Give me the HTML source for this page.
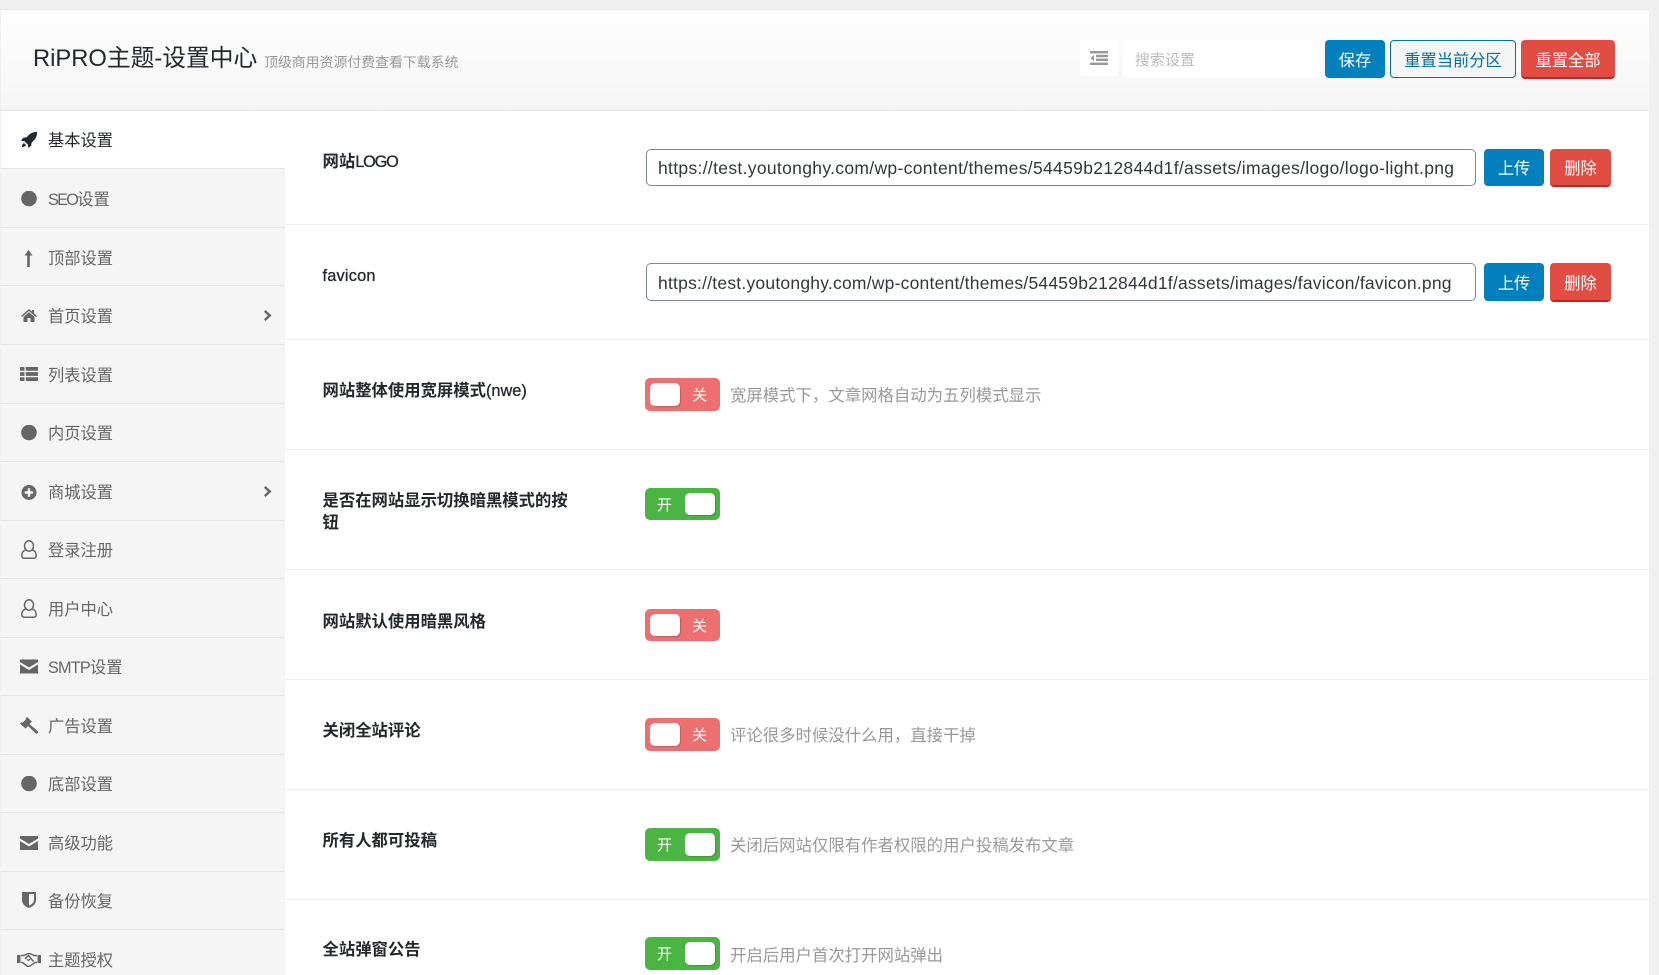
<!DOCTYPE html>
<html lang="zh-CN"><head><meta charset="utf-8"><title>RiPRO主题-设置中心</title>
<style>
html,body{margin:0;padding:0;width:1659px;height:975px;overflow:hidden;background:#f0f0f1}
body{position:relative;font-family:"Liberation Sans","Noto Sans CJK SC",sans-serif;font-size:16.25px;color:#444}
div,svg{position:absolute;box-sizing:border-box}
#panel{left:1px;top:9px;width:1648px;height:966px;background:#fff;border-top:1px solid #e5e5e5;overflow:hidden}
.t{white-space:nowrap;height:30px;line-height:30px}
.hr{left:0;width:1659px;height:1px;background:#eeeeee}
.sb{left:1px;width:284px;height:1px;background:#e4e4e4}
.n{left:48px;color:#666}
.l{left:322.500px;font-weight:700;color:#23282d;font-size:16.350px}
.l i{font-style:normal;font-weight:400;-webkit-text-stroke:.3px #23282d}
.d{left:730px;color:#999;font-size:16.400px}
.b{text-align:center;border-radius:4px;line-height:42px;color:#fff;font-size:16.25px;white-space:nowrap}
.blue{background:#0180bd}
.red{background:#e14d43;border-bottom:2px solid #c4261d;line-height:42px}
.inp{left:646px;width:830px;background:#fff;border:1px solid #7e8993;border-radius:5px;color:#32373c;font-size:17.500px;padding-left:11px;white-space:nowrap;overflow:hidden}
.sw{left:645px;width:75px;border-radius:5px;color:#fff;font-size:15px}
.off{background:#ed6f6f}.on{background:#4bb543}
.k{width:30px;top:5px;bottom:5px;background:#fff;border-radius:5px;box-shadow:1px 1px 1px rgba(0,0,0,.18)}
.off .k{left:5px}.on .k{left:40px}
.off span{position:absolute;left:47px;top:0;bottom:0;width:16px;display:flex;align-items:center}
.on span{position:absolute;left:12px;top:0;bottom:0;width:16px;display:flex;align-items:center}
svg{fill:#666}
</style></head><body>
<div id="panel"></div>
<!-- header -->
<div style="left:1px;top:10px;width:1648px;height:101px;background:linear-gradient(#fefefe,#f5f5f5);border-bottom:1px solid #e5e5e5"></div>
<div class="t" style="left:33px;top:44px;font-size:23.750px;color:#23282d">RiPRO主题-设置中心</div>
<div class="t" style="left:264px;top:46.500px;font-size:13.900px;color:#999">顶级商用资源付费查看下载系统</div>
<div style="left:1080px;top:40px;width:38px;height:36px;background:#fff;border-radius:3px"></div>
<svg style="left:1090px;top:51px" width="18" height="14" viewBox="0 0 18 14"><g fill="#999"><rect width="18" height="2.400"/><rect x="6" y="3.800" width="12" height="2.400"/><rect x="6" y="7.600" width="12" height="2.400"/><rect y="11.600" width="18" height="2.400"/><path d="M4 4v6L0.500 7z"/></g></svg>
<div style="left:1123px;top:40px;width:197px;height:38px;background:#fff;border-radius:3px"></div>
<div class="t" style="left:1135px;top:46px;color:#bbb;font-size:15px">搜索设置</div>
<div class="b blue" style="left:1325px;top:40px;width:60px;height:38px">保存</div>
<div class="b" style="left:1390px;top:40px;width:126px;height:38px;line-height:40px;background:#f3f5f6;border:1px solid #0071a1;color:#0071a1">重置当前分区</div>
<div class="b red" style="left:1521px;top:40px;width:94px;height:39px">重置全部</div>
<!-- sidebar -->
<div style="left:1px;top:111px;width:284px;height:864px;background:#f5f5f5"></div>
<div style="left:1px;top:111px;width:284px;height:57px;background:#fff"></div>
<div class="sb" style="top:168px"></div><div class="sb" style="top:227px"></div><div class="sb" style="top:285px"></div><div class="sb" style="top:344px"></div><div class="sb" style="top:403px"></div><div class="sb" style="top:461px"></div><div class="sb" style="top:520px"></div><div class="sb" style="top:578px"></div><div class="sb" style="top:637px"></div><div class="sb" style="top:695px"></div><div class="sb" style="top:754px"></div><div class="sb" style="top:812px"></div><div class="sb" style="top:871px"></div><div class="sb" style="top:929px"></div>
<div class="t n" style="top:126px;color:#23282d">基本设置</div>
<div class="t n" style="top:185px"><span style="letter-spacing:-1.700px">SEO</span>设置</div>
<div class="t n" style="top:244px">顶部设置</div>
<div class="t n" style="top:302px">首页设置</div>
<div class="t n" style="top:361px">列表设置</div>
<div class="t n" style="top:419px">内页设置</div>
<div class="t n" style="top:478px">商城设置</div>
<div class="t n" style="top:536px">登录注册</div>
<div class="t n" style="top:595px">用户中心</div>
<div class="t n" style="top:653px"><span style="letter-spacing:-.800px">SMTP</span>设置</div>
<div class="t n" style="top:712px">广告设置</div>
<div class="t n" style="top:770px">底部设置</div>
<div class="t n" style="top:829px">高级功能</div>
<div class="t n" style="top:887px">备份恢复</div>
<div class="t n" style="top:946px">主题授权</div>
<!-- sidebar icons -->
<svg style="left:21px;top:132px;fill:#23282d" width="16" height="16" viewBox="0 0 16 16"><path d="M16 0c-3.400-.2-6.600 1-8.800 3.500L5.600 5.200 2.300 5.700 0 8.800l3.400.3 3.500 3.500.3 3.400 3-2.200.5-3.300 1.700-1.600C15 6.600 16.200 3.400 16 0zM2.900 11c-1.200.6-1.900 2-2.100 4.200 2.200-.2 3.600-.9 4.200-2.100z"/></svg>
<svg style="left:21px;top:191px" width="16" height="16"><circle cx="8" cy="7.500" r="7.800"/></svg>
<svg style="left:24px;top:250px" width="9" height="17" viewBox="0 0 9 17"><path d="M4.500 0L8.500 5.500H5.800v11.500H3.200V5.500H.5z"/></svg>
<svg style="left:21px;top:309px" width="16" height="13" viewBox="0 0 16 13"><path d="M8 0l3 2.500V1h2v3.200L16 7l-1 1-7-6-7 6-1-1zM8 3.200l5.500 4.700V13H9.500V9h-3v4h-4V7.900z"/></svg>
<svg style="left:20px;top:367px" width="18" height="14" viewBox="0 0 18 14"><path d="M0 0h4.500v3.800H0zM5.800 0H18v3.800H5.800zM0 5.100h4.500v3.800H0zM5.800 5.100H18v3.800H5.800zM0 10.200h4.500V14H0zM5.800 10.200H18V14H5.800z"/></svg>
<svg style="left:21px;top:425px" width="16" height="16"><circle cx="8" cy="7.500" r="7.800"/></svg>
<svg style="left:21px;top:485px" width="16" height="15" viewBox="0 0 16 16"><path fill-rule="evenodd" d="M8 0a8 8 0 1 1 0 16A8 8 0 0 1 8 0zM6.700 3.500v3.200H3.500v2.600h3.200v3.200h2.600V9.300h3.200V6.700H9.300V3.500z"/></svg>
<svg style="left:21px;top:540px" width="16" height="19" viewBox="0 0 16 19"><g fill="none" stroke="#666" stroke-width="1.500"><ellipse cx="8" cy="6" rx="4.500" ry="5.200"/><path d="M5 9.800C2.500 10.500.8 12.500.8 15.500c0 1.800 1 2.700 2.700 2.700h9c1.700 0 2.700-.9 2.700-2.700 0-3-1.700-5-4.200-5.700"/></g></svg>
<svg style="left:21px;top:599px" width="16" height="19" viewBox="0 0 16 19"><g fill="none" stroke="#666" stroke-width="1.500"><ellipse cx="8" cy="6" rx="4.500" ry="5.200"/><path d="M5 9.800C2.500 10.500.8 12.500.8 15.500c0 1.800 1 2.700 2.700 2.700h9c1.700 0 2.700-.9 2.700-2.700 0-3-1.700-5-4.200-5.700"/></g></svg>
<svg style="left:20px;top:659px" width="18" height="15" viewBox="0 0 18 14"><path d="M0 0h18v2.500L9 8 0 2.500zM0 5l9 5.500L18 5v9H0z"/></svg>
<svg style="left:20px;top:717px" width="18" height="17" viewBox="0 0 18 17"><path d="M7 0l5 4.500L10.600 6 9.500 7 17 13.500c1 1 1.300 1.900.6 2.700-.8.900-1.700.5-2.600-.5L8 9 7 10.200 5.500 11.500 0 6.500l1.500-1.300.9.600L6.300 2 5.500 1.300z"/></svg>
<svg style="left:20px;top:776px" width="18" height="16"><circle cx="9" cy="7.500" r="7.800"/></svg>
<svg style="left:20px;top:836px" width="18" height="14" viewBox="0 0 18 14"><path d="M0 0h18v2.500L9 8 0 2.500zM0 5l9 5.500L18 5v9H0z"/></svg>
<svg style="left:22px;top:892px" width="14" height="16" viewBox="0 0 14 16"><path fill-rule="evenodd" d="M0 0h14v8c0 4-3.500 6.700-7 8-3.500-1.300-7-4-7-8zM7 2v11.700c2.400-1.100 5-3 5-5.700V2z"/></svg>
<svg style="left:17px;top:953px" width="24" height="14" viewBox="0 0 24 14"><g fill="none" stroke="#666" stroke-width="1.500"><path d="M4 2.500h3L10 1c1.500-.6 2.800-.6 4 0l3 1.500h3M4 9.500h1.500l4.500 3.500c1 .7 2 .7 3 0l5-3.500h2M8 6l3.500-3.500 5 6M10 6.500c1 .9 2.300.7 3-.3"/></g><rect x="0" y="2" width="3.500" height="8"/><rect x="20.500" y="2" width="3.500" height="8"/></svg>
<svg style="left:264px;top:310px" width="8" height="11" viewBox="0 0 8 11"><path d="M1.500 0L7.500 5.500 1.500 11 0 9.300 3.800 5.500 0 1.700z"/></svg>
<svg style="left:264px;top:486px" width="8" height="11" viewBox="0 0 8 11"><path d="M1.500 0L7.500 5.500 1.500 11 0 9.300 3.800 5.500 0 1.700z"/></svg>
<!-- rows -->
<div class="hr" style="left:285px;top:224px;width:1364px"></div>
<div class="hr" style="left:285px;top:339px;width:1364px"></div>
<div class="hr" style="left:285px;top:449px;width:1364px"></div>
<div class="hr" style="left:285px;top:569px;width:1364px"></div>
<div class="hr" style="left:285px;top:679px;width:1364px"></div>
<div class="hr" style="left:285px;top:789px;width:1364px"></div>
<div class="hr" style="left:285px;top:899px;width:1364px"></div>
<div class="t l" style="top:147px">网站<i style="letter-spacing:-1.200px">LOGO</i></div>
<div class="inp" style="top:149px;height:37px;line-height:37px;letter-spacing:.32px">https://test.youtonghy.com/wp-content/themes/54459b212844d1f/assets/images/logo/logo-light.png</div>
<div class="b blue" style="left:1484px;top:149px;width:60px;height:37px;line-height:41px">上传</div>
<div class="b red" style="left:1550px;top:149px;width:61px;height:38px;line-height:41px">删除</div>
<div class="t l" style="top:261px"><i style="letter-spacing:.2px">favicon</i></div>
<div class="inp" style="top:263px;height:38px;line-height:39px;letter-spacing:.22px">https://test.youtonghy.com/wp-content/themes/54459b212844d1f/assets/images/favicon/favicon.png</div>
<div class="b blue" style="left:1484px;top:263px;width:60px;height:38px">上传</div>
<div class="b red" style="left:1550px;top:263px;width:61px;height:39px">删除</div>
<div class="t l" style="top:376px">网站整体使用宽屏模式<i>(nwe)</i></div>
<div class="sw off" style="top:378px;height:33px"><div class="k"></div><span>关</span></div>
<div class="t d" style="top:381px">宽屏模式下，文章网格自动为五列模式显示</div>
<div class="t l" style="top:486px">是否在网站显示切换暗黑模式的按</div>
<div class="t l" style="top:508px">钮</div>
<div class="sw on" style="top:488px;height:32px"><span>开</span><div class="k"></div></div>
<div class="t l" style="top:607px">网站默认使用暗黑风格</div>
<div class="sw off" style="top:609px;height:32px"><div class="k"></div><span>关</span></div>
<div class="t l" style="top:716px">关闭全站评论</div>
<div class="sw off" style="top:718px;height:33px"><div class="k"></div><span>关</span></div>
<div class="t d" style="top:721px">评论很多时候没什么用，直接干掉</div>
<div class="t l" style="top:826px">所有人都可投稿</div>
<div class="sw on" style="top:828px;height:33px"><span>开</span><div class="k"></div></div>
<div class="t d" style="top:831px">关闭后网站仅限有作者权限的用户投稿发布文章</div>
<div class="t l" style="top:935px">全站弹窗公告</div>
<div class="sw on" style="top:937px;height:33px"><span>开</span><div class="k"></div></div>
<div class="t d" style="top:941px">开启后用户首次打开网站弹出</div>
</body></html>
